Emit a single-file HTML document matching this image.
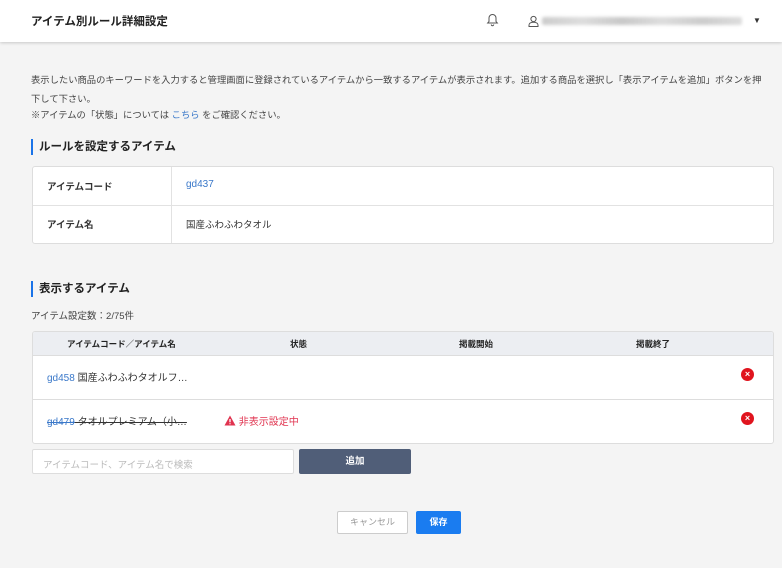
<!DOCTYPE html>
<html><head><meta charset="utf-8"><style>
*{box-sizing:border-box;margin:0;padding:0}
body{width:782px;height:568px;background:#f4f4f4;font-family:"Liberation Sans","Noto Sans CJK JP",sans-serif;color:#333;font-size:10px;position:relative;overflow:hidden}
.hdr{position:absolute;left:0;top:0;width:782px;height:42px;background:#fff;box-shadow:0 1px 3px rgba(0,0,0,.18)}
.abs{position:absolute;white-space:nowrap}
.bar{border-left:2px solid #1a73e8;padding-left:6px;font-weight:bold;font-size:11.5px;color:#222;height:16px;line-height:16px}
.box{position:absolute;background:#fff;border:1px solid #ddd;border-radius:3px}
a{color:#3a78c9;text-decoration:none}
.x{position:absolute;width:13px;height:13px;border-radius:50%;background:#e0141e;color:#fff;font-size:9px;font-weight:bold;line-height:13px;text-align:center}
</style></head><body>
<div class="hdr">
<div class="abs" style="left:31px;top:13px;font-size:11.5px;font-weight:bold;color:#222">アイテム別ルール詳細設定</div>
<svg class="abs" style="left:486px;top:13px" width="13" height="14" viewBox="0 0 13 14"><path d="M6.5 1.5c-2 0-3.5 1.5-3.5 3.5v3.5l-1.3 1.5h9.6L10 8.5V5c0-2-1.5-3.5-3.5-3.5z M5.3 11.5a1.2 1.2 0 0 0 2.4 0" fill="none" stroke="#555" stroke-width="1"/></svg>
<svg class="abs" style="left:528px;top:15px" width="11" height="12" viewBox="0 0 11 12"><circle cx="5.5" cy="4" r="2.6" fill="none" stroke="#555"/><path d="M1 11.5v-1.5c0-1.5 1.5-2.8 4.5-2.8s4.5 1.3 4.5 2.8v1.5z" fill="none" stroke="#555"/></svg>
<div class="abs" style="left:542px;top:17px;width:200px;height:8px;background:linear-gradient(90deg,#ccc,#ddd 20%,#c8c8c8 40%,#ddd 60%,#ccc 80%,#ddd);border-radius:2px;filter:blur(1.5px)"></div>
<div class="abs" style="left:753px;top:16px;font-size:8px;color:#333">▼</div>
</div>
<div class="abs" style="left:31px;top:71px;line-height:19px;font-size:9.3px;color:#444">表示したい商品のキーワードを入力すると管理画面に登録されているアイテムから一致するアイテムが表示されます。追加する商品を選択し「表示アイテムを追加」ボタンを押<br>下して下さい。</div>
<div class="abs" style="left:31px;top:107px;font-size:9.3px;color:#444">※アイテムの「状態」については <a>こちら</a> をご確認ください。</div>
<div class="abs bar" style="left:31px;top:139px">ルールを設定するアイテム</div>
<div class="box" style="left:32px;top:166px;width:742px;height:78px">
<div class="abs" style="left:138px;top:0;width:1px;height:76px;background:#e2e2e2"></div>
<div class="abs" style="left:0;top:38px;width:740px;height:1px;background:#e2e2e2"></div>
<div class="abs" style="left:14px;top:12px;font-weight:bold;font-size:9.5px">アイテムコード</div>
<div class="abs" style="left:153px;top:12px"><a>gd437</a></div>
<div class="abs" style="left:14px;top:50px;font-weight:bold;font-size:9.5px">アイテム名</div>
<div class="abs" style="left:153px;top:50px;font-size:9.5px">国産ふわふわタオル</div>
</div>
<div class="abs bar" style="left:31px;top:281px">表示するアイテム</div>
<div class="abs" style="left:31px;top:308px;font-size:9.5px;color:#444">アイテム設定数：2/75件</div>
<div class="box" style="left:32px;top:331px;width:742px;height:113px;overflow:hidden">
<div class="abs" style="left:0;top:0;width:742px;height:24px;background:#eceef2;border-bottom:1px solid #ddd"></div>
<div class="abs" style="left:34px;top:6px;font-size:8.5px;font-weight:bold;color:#222">アイテムコード／アイテム名</div>
<div class="abs" style="left:257px;top:6px;font-size:8.5px;font-weight:bold;color:#222">状態</div>
<div class="abs" style="left:426px;top:6px;font-size:8.5px;font-weight:bold;color:#222">掲載開始</div>
<div class="abs" style="left:603px;top:6px;font-size:8.5px;font-weight:bold;color:#222">掲載終了</div>
<div class="abs" style="left:0;top:67px;width:742px;height:1px;background:#ddd"></div>
<div class="abs" style="left:14px;top:37px;font-size:10px"><a>gd458</a> 国産ふわふわタオルフ…</div>
<div class="abs" style="left:14px;top:81px;font-size:10px;text-decoration:line-through"><a style="text-decoration:line-through">gd479</a> タオルプレミアム（小…</div>
<div class="abs" style="left:191px;top:81px;font-size:10px;color:#e0334f">
<svg width="12" height="11" viewBox="0 0 12 11" style="vertical-align:-1px"><path d="M6 0.5L11.5 10.5H0.5z" fill="#e0334f"/><path d="M6 4v3.3M6 8.3v1" stroke="#fff" stroke-width="1.3"/></svg> 非表示設定中</div>
<div class="x" style="left:708px;top:36px">×</div>
<div class="x" style="left:708px;top:80px">×</div>
</div>
<div class="abs" style="left:32px;top:449px;width:262px;height:25px;background:#fff;border:1px solid #ddd;border-radius:2px;padding:7px 10px;font-size:9.5px;color:#bbb">アイテムコード、アイテム名で検索</div>
<div class="abs" style="left:299px;top:449px;width:112px;height:25px;background:#505e78;border-radius:2px;color:#fff;font-weight:bold;font-size:9.5px;text-align:center;line-height:25px">追加</div>
<div class="abs" style="left:337px;top:511px;width:71px;height:23px;background:#fff;border:1px solid #ccc;border-radius:2px;color:#999;font-size:9px;text-align:center;line-height:21px">キャンセル</div>
<div class="abs" style="left:416px;top:511px;width:45px;height:23px;background:#1a7cf0;border-radius:2px;color:#fff;font-weight:bold;font-size:9px;text-align:center;line-height:23px">保存</div>
</body></html>
